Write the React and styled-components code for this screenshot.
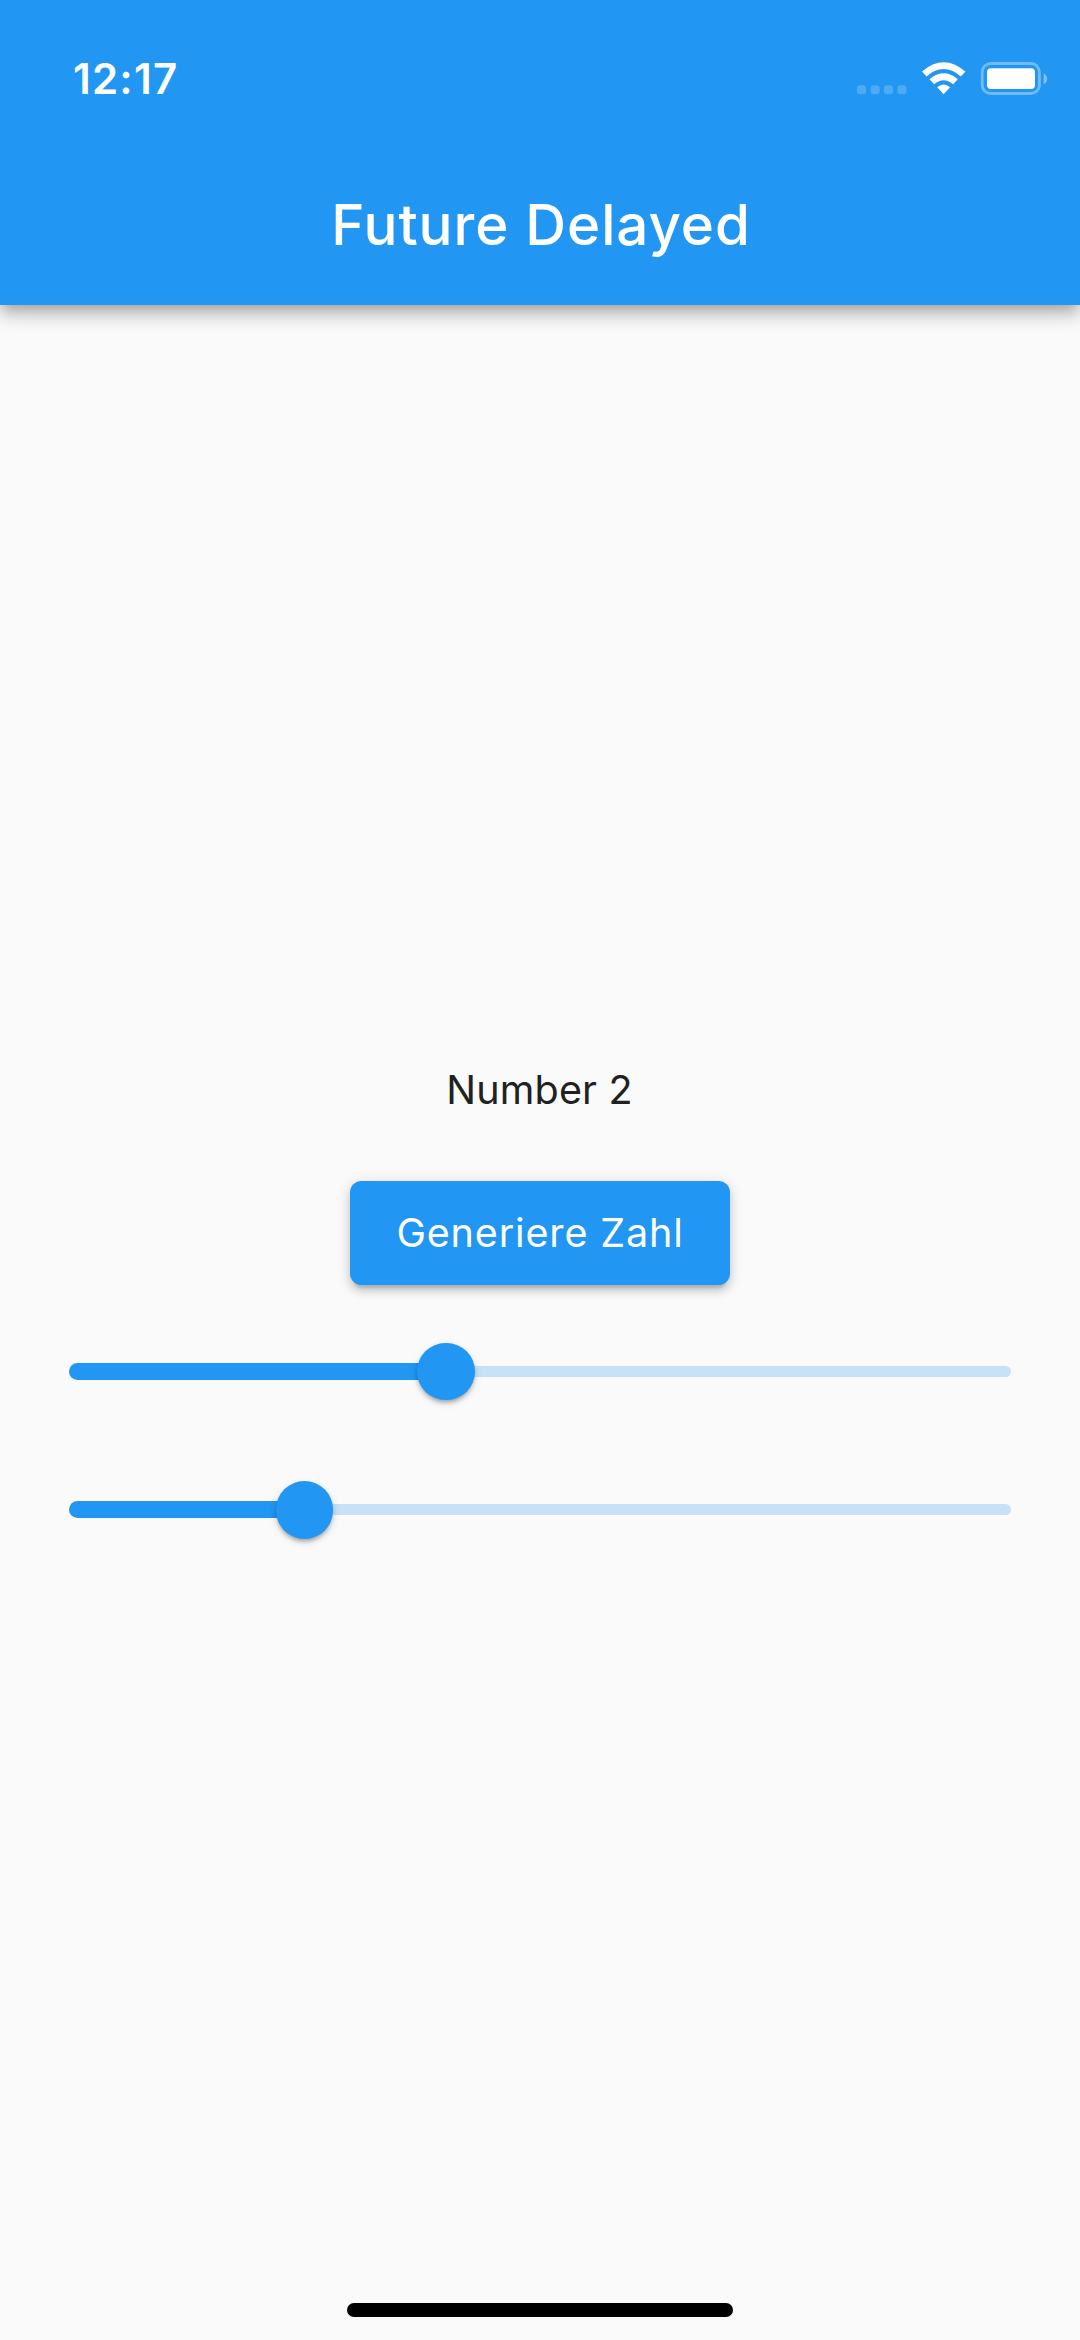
import React from "react";
import styled, { createGlobalStyle } from "styled-components";

const GlobalStyle = createGlobalStyle`
  * { box-sizing: border-box; }
  body { margin: 0; background: #fafafa; }
`;

const Screen = styled.div`
  width: 1080px;
  height: 2340px;
  display: flex;
  flex-direction: column;
  overflow: hidden;
  background: #fafafa;
  font-family: Inter, "Liberation Sans", sans-serif;
`;

const Header = styled.header`
  height: 305.4px;
  flex: none;
  background: #2196f3;
  color: #fff;
  box-shadow: 0 5.76px 11.52px -2.88px rgba(0, 0, 0, 0.2),
    0 11.52px 14.4px rgba(0, 0, 0, 0.14), 0 2.88px 28.8px rgba(0, 0, 0, 0.12);
`;

const StatusBar = styled.div`
  height: 144px;
  display: flex;
  justify-content: space-between;
  padding: 53px 33px 0 73px;
`;

const Time = styled.div`
  font-size: 42px;
  line-height: 52px;
  font-weight: 600;
  letter-spacing: 1.2px;
  white-space: nowrap;
`;

const StatusIcons = styled.svg`
  width: 190px;
  height: 33px;
  margin-top: 9px;
`;

const Title = styled.h1`
  margin: 0;
  padding-left: 2px;
  height: 161px;
  line-height: 161px;
  text-align: center;
  font-size: 56.5px;
  font-weight: 500;
  letter-spacing: 0.93px;
  white-space: nowrap;
`;

const Content = styled.main`
  flex: 1;
  padding: 759.6px 0 0;
  display: flex;
  flex-direction: column;
  align-items: center;
`;

const Label = styled.p`
  margin: 0;
  padding-right: 1px;
  height: 51px;
  line-height: 51px;
  font-size: 39.5px;
  letter-spacing: 0.2px;
  color: #212121;
  white-space: nowrap;
`;

const Button = styled.button`
  margin: 65.4px 0 17px;
  width: 380px;
  height: 104px;
  flex: none;
  padding: 0;
  border: 0;
  border-radius: 11.52px;
  background: #2196f3;
  color: #fff;
  font: inherit;
  font-size: 39.5px;
  letter-spacing: 0.85px;
  white-space: nowrap;
  box-shadow: 0 8.64px 2.88px -5.76px rgba(0, 0, 0, 0.12),
    0 5.76px 8px rgba(0, 0, 0, 0.14), 0 2.88px 14.4px rgba(0, 0, 0, 0.12);
`;

const SliderRow = styled.div`
  align-self: stretch;
  height: 138.24px;
  flex: none;
  padding: 0 69.1px;
  display: flex;
  align-items: center;
`;

const ActiveTrack = styled.div`
  flex: ${(p) => p.$share} 0 0;
  height: 17.28px;
  border-radius: 9px 0 0 9px;
  background: #2196f3;
`;

const InactiveTrack = styled.div`
  flex: ${(p) => 1 - p.$share} 0 0;
  height: 11.52px;
  border-radius: 0 6px 6px 0;
  background: #c6e1f8;
`;

const Thumb = styled.div`
  width: 57.6px;
  height: 57.6px;
  flex: none;
  margin: 0 -28.8px;
  z-index: 1;
  border-radius: 50%;
  background: #2196f3;
  box-shadow: 0 4px 4px -2.88px rgba(0, 0, 0, 0.2),
    0 2.88px 4px rgba(0, 0, 0, 0.14), 0 2.88px 8.64px rgba(0, 0, 0, 0.12);
`;

const HomeArea = styled.footer`
  height: 37.5px;
  flex: none;
  display: flex;
  justify-content: center;
`;

const HomeIndicator = styled.div`
  width: 386px;
  height: 14.4px;
  border-radius: 7.2px;
  background: #000;
`;

function Slider({ value }) {
  return (
    <SliderRow>
      <ActiveTrack $share={value} />
      <Thumb />
      <InactiveTrack $share={value} />
    </SliderRow>
  );
}

export default function App() {
  return (
    <>
      <GlobalStyle />
      <Screen>
        <Header>
          <StatusBar>
            <Time>12:17</Time>
            <StatusIcons viewBox="857 62 190 33" fill="#fff">
              <g fillOpacity="0.2">
                <rect x="857" y="85.3" width="9" height="9" rx="3" />
                <rect x="870.6" y="85.3" width="9" height="9" rx="3" />
                <rect x="884" y="85.3" width="9" height="9" rx="3" />
                <rect x="897.5" y="85.3" width="9" height="9" rx="3" />
              </g>
              <path d="M921.9 71.6 Q943.6 53 965.4 71.6 L960.8 76.4 Q943.6 61.8 926.6 76.4 Z" />
              <path d="M929.5 79.3 Q943.6 67.4 957.8 79.3 L953.2 84.3 Q943.6 76.4 934.1 84.3 Z" />
              <path d="M937.2 87.2 Q943.6 81.7 950.1 87.2 L943.6 94.2 Z" />
              <rect x="982.2" y="63.5" width="57.2" height="30" rx="8.5" fill="none" stroke="#fff" strokeOpacity="0.36" strokeWidth="2.8" />
              <rect x="987" y="68.2" width="48" height="20.8" rx="4" />
              <path d="M1043.6 73.6 Q1047.2 75.2 1047.2 78.8 Q1047.2 82.4 1043.6 84 Z" fillOpacity="0.42" />
            </StatusIcons>
          </StatusBar>
          <Title>Future Delayed</Title>
        </Header>
        <Content>
          <Label>Number 2</Label>
          <Button type="button">Generiere Zahl</Button>
          <Slider value={0.4} />
          <Slider value={0.25} />
        </Content>
        <HomeArea>
          <HomeIndicator />
        </HomeArea>
      </Screen>
    </>
  );
}
